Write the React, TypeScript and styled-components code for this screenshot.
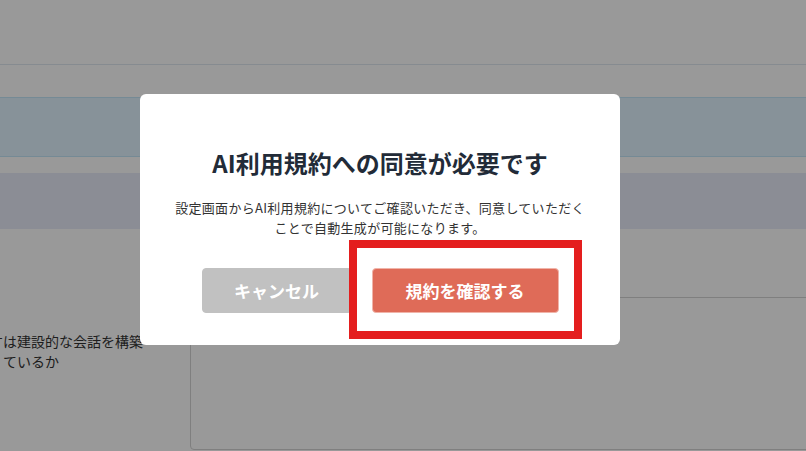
import { FC } from "react";
import styled, { createGlobalStyle } from "styled-components";

const GlobalStyle = createGlobalStyle`
	html, body {
		margin: 0;
		padding: 0;
		height: 100%;
		overflow: hidden;
		background: #ffffff;
		font-family: "Noto Sans CJK JP", "Noto Sans", sans-serif;
	}
	#root {
		height: 100%;
	}
`;

export default function App() {
	return (
		<>
			<GlobalStyle />
			<Page>
				<Header />
				<Notice />
				<SectionBar />
				<FormRow>
					<Label>
						すは建設的な会話を構築
						<br />
						ているか
					</Label>
					<TextArea />
				</FormRow>
			</Page>
			<ConsentModal />
		</>
	);
}

const ConsentModal: FC = () => {
	return (
		<Overlay>
			<Dialog>
				<Title>AI利用規約への同意が必要です</Title>
				<Message>
					設定画面からAI利用規約についてご確認いただき、同意していただく
					<br />
					ことで自動生成が可能になります。
				</Message>
				<Actions>
					<ActionButton type='button' $variant='cancel'>
						キャンセル
					</ActionButton>
					<Highlighted>
						<ActionButton type='button' $variant='primary'>
							規約を確認する
						</ActionButton>
						<Marker />
					</Highlighted>
				</Actions>
			</Dialog>
		</Overlay>
	);
};

const Page = styled.div`
	height: 100%;
	display: flex;
	flex-direction: column;
`;

const Header = styled.header`
	height: 64px;
	flex-shrink: 0;
	border-bottom: 1px solid #dfe8f0;
`;

const Notice = styled.div`
	height: 58px;
	flex-shrink: 0;
	margin-top: 32px;
	background: #e1f3ff;
	border-top: 1px solid #c3e6f8;
	border-bottom: 1px solid #c3e6f8;
`;

const SectionBar = styled.div`
	height: 56px;
	flex-shrink: 0;
	margin-top: 16px;
	background: #e8ebf8;
`;

const FormRow = styled.div`
	flex: 1;
	display: grid;
	grid-template-columns: 190px 1fr;
	padding-top: 68px;
	padding-bottom: 1px;
`;

const Label = styled.div`
	padding-left: 3px;
	padding-top: 34px;
	text-indent: -14px;
	white-space: nowrap;
	font-size: 14px;
	line-height: 20px;
	color: #333333;
`;

const TextArea = styled.div`
	margin-right: -20px;
	border: 1px solid #d4d4d4;
	border-radius: 4px;
`;

const Overlay = styled.div`
	position: fixed;
	inset: 0;
	background: rgba(0, 0, 0, 0.4);
	display: flex;
	align-items: center;
	justify-content: center;
	padding: 0 46px 13px 0;
`;

const Dialog = styled.div`
	width: 480px;
	box-sizing: border-box;
	background: #ffffff;
	border-radius: 6px;
	padding: 52px 20px 32px;
	display: flex;
	flex-direction: column;
	align-items: center;
`;

const Title = styled.h2`
	margin: 0;
	font-size: 24px;
	line-height: 34px;
	font-weight: 700;
	color: #222b38;
`;

const Message = styled.p`
	margin: 18px 0 0;
	font-size: 13px;
	letter-spacing: 0.3px;
	line-height: 20px;
	text-align: center;
	color: #333333;
`;

const Actions = styled.div`
	margin-top: 30px;
	display: flex;
	gap: 20px;
`;

const Highlighted = styled.div`
	position: relative;
	display: flex;
`;

const Marker = styled.span`
	position: absolute;
	top: -28px;
	bottom: -26px;
	left: -23px;
	right: -23px;
	border: 8px solid #e41e1e;
	pointer-events: none;
`;

const ActionButton = styled.button<{ $variant: "cancel" | "primary" }>`
	height: 45px;
	width: ${({ $variant }) => ($variant === "primary" ? "187px" : "150px")};
	border-radius: 4px;
	border: 1px solid ${({ $variant }) => ($variant === "primary" ? "#f0b4a9" : "#c1c1c1")};
	background: ${({ $variant }) => ($variant === "primary" ? "#df6b58" : "#c1c1c1")};
	color: #ffffff;
	font-family: "Noto Sans CJK JP", "Noto Sans", sans-serif;
	font-size: 17px;
	font-weight: 700;
	cursor: pointer;
	padding: 0;
`;
